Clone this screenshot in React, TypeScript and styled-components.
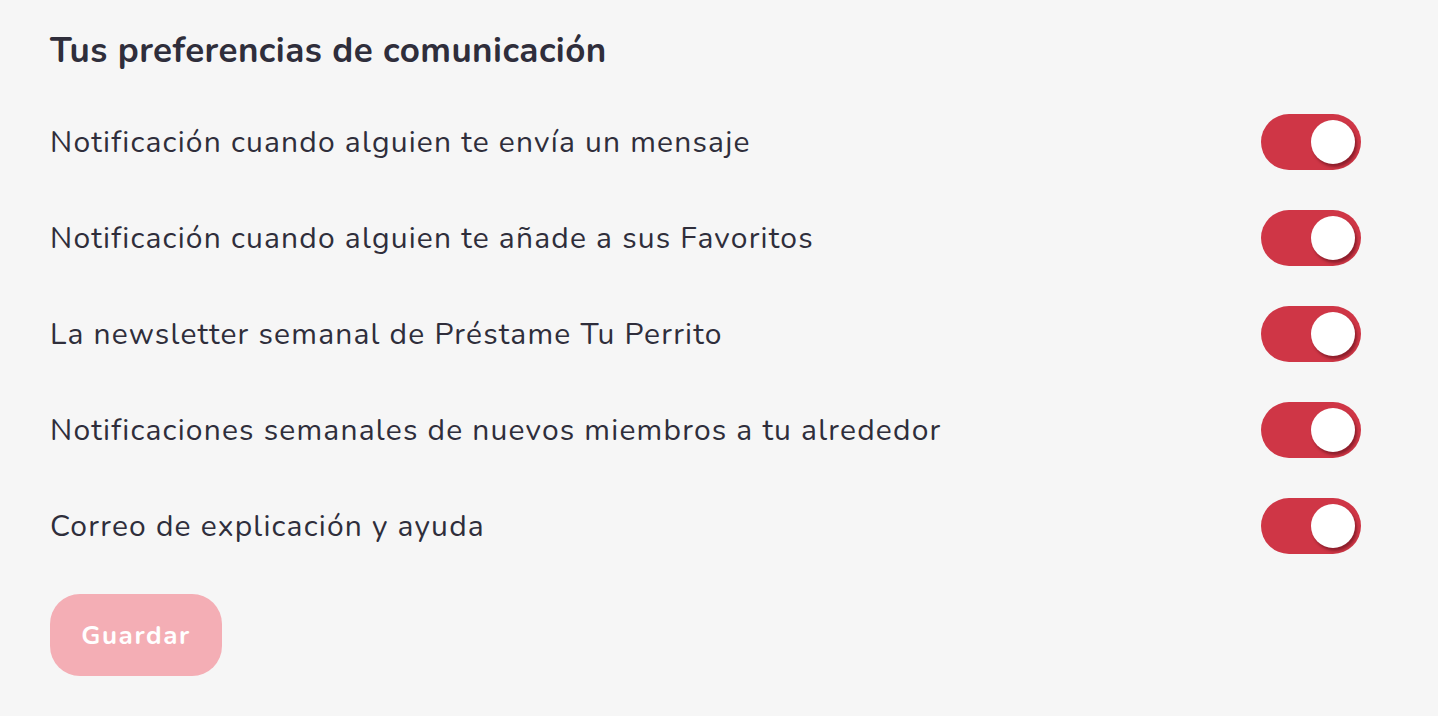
import React, { useState } from 'react'
import styled, { createGlobalStyle } from 'styled-components'

const GlobalStyle = createGlobalStyle`
  html, body {
    margin: 0;
    padding: 0;
    background: #f6f6f6;
  }
  body {
    font-family: "Nunito", "Lato", "Noto Sans", sans-serif;
    color: #2f2e3b;
  }
`

const Page = styled.div`
  width: 1438px;
  height: 716px;
  box-sizing: border-box;
  padding: 29px 77px 0 50px;
  background: #f6f6f6;
`

const Title = styled.h2`
  margin: 0 0 21px 0;
  font-size: 35px;
  font-weight: 700;
  line-height: 44px;
  letter-spacing: 0.45px;
  color: #2f2e3b;
`

const List = styled.div`
  display: flex;
  flex-direction: column;
`

const Row = styled.div`
  display: flex;
  align-items: center;
  justify-content: space-between;
  height: 96px;
`

const Label = styled.span`
  font-size: 30px;
  font-weight: 400;
  color: #2f2e3b;
  letter-spacing: 1.2px;
`

const Track = styled.button<{ $on: boolean }>`
  position: relative;
  width: 100px;
  height: 56px;
  border: none;
  padding: 0;
  border-radius: 28px;
  background: ${({ $on }) => ($on ? '#cf3646' : '#c9c9cf')};
  cursor: pointer;
`

const Knob = styled.span<{ $on: boolean }>`
  position: absolute;
  top: 6px;
  left: ${({ $on }) => ($on ? '50px' : '6px')};
  width: 44px;
  height: 44px;
  border-radius: 50%;
  background: #ffffff;
  box-shadow: 2px 3px 3px rgba(60, 0, 10, 0.45);
  transition: left 0.2s ease;
`

const SaveButton = styled.button`
  margin-top: 20px;
  width: 172px;
  height: 82px;
  border: none;
  border-radius: 30px;
  background: #f4aeb5;
  color: #ffffff;
  font-family: inherit;
  font-size: 26px;
  font-weight: 700;
  letter-spacing: 1.6px;
  cursor: pointer;
`

const PREFS = [
  'Notificación cuando alguien te envía un mensaje',
  'Notificación cuando alguien te añade a sus Favoritos',
  'La newsletter semanal de Préstame Tu Perrito',
  'Notificaciones semanales de nuevos miembros a tu alrededor',
  'Correo de explicación y ayuda',
]

function Toggle({ on, onClick }: { on: boolean; onClick: () => void }) {
  return (
    <Track $on={on} onClick={onClick} aria-pressed={on}>
      <Knob $on={on} />
    </Track>
  )
}

export default function App() {
  const [values, setValues] = useState<boolean[]>(PREFS.map(() => true))

  const flip = (i: number) =>
    setValues(v => v.map((x, j) => (j === i ? !x : x)))

  return (
    <Page>
      <GlobalStyle />
      <Title>Tus preferencias de comunicación</Title>
      <List>
        {PREFS.map((p, i) => (
          <Row key={p}>
            <Label>{p}</Label>
            <Toggle on={values[i]} onClick={() => flip(i)} />
          </Row>
        ))}
      </List>
      <SaveButton>Guardar</SaveButton>
    </Page>
  )
}
